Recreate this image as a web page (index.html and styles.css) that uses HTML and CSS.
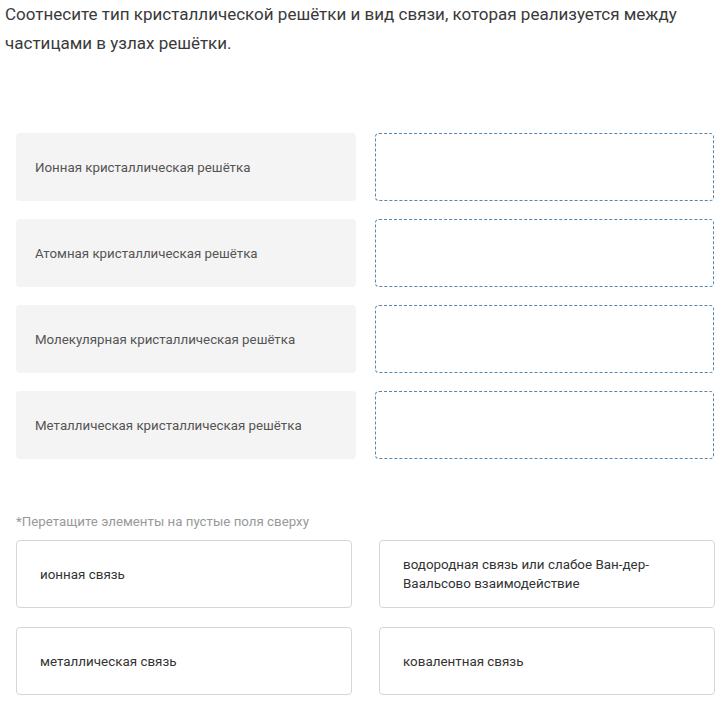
FILE: index.html
```html
<!DOCTYPE html>
<html lang="ru">
<head>
    <meta charset="UTF-8">
    <meta name="viewport" content="width=device-width, initial-scale=1.0">
    <title>Соотнесите тип кристаллической решётки</title>
    <link rel="stylesheet" href="styles.css">
</head>
<body>
    <div class="task">
        <p class="question">Соотнесите тип кристаллической решётки и вид связи, которая реализуется между частицами в узлах решётки.</p>
        <div class="pairs">
            <div class="pair">
                <div class="term">Ионная кристаллическая решётка</div>
                <div class="slot"></div>
            </div>
            <div class="pair">
                <div class="term">Атомная кристаллическая решётка</div>
                <div class="slot"></div>
            </div>
            <div class="pair">
                <div class="term">Молекулярная кристаллическая решётка</div>
                <div class="slot"></div>
            </div>
            <div class="pair">
                <div class="term">Металлическая кристаллическая решётка</div>
                <div class="slot"></div>
            </div>
        </div>
        <div class="hint">*Перетащите элементы на пустые поля сверху</div>
        <div class="options">
            <div class="option">ионная связь</div>
            <div class="option">водородная связь или слабое Ван-дер-Ваальсово взаимодействие</div>
            <div class="option">металлическая связь</div>
            <div class="option">ковалентная связь</div>
        </div>
    </div>
</body>
</html>
```

FILE: styles.css
```css
body {
    margin: 0;
    font-family: Roboto, "Open Sans", sans-serif;
    background-color: #fff;
    color: #333;
}
.task {
    padding: 0 14px 0 16px;
}
.question {
    margin: 0 0 0 -11px;
    font-size: 17px;
    line-height: 29px;
    color: #3a3a3a;
    max-width: 700px;
}
.pairs {
    display: flex;
    flex-direction: column;
    gap: 18px;
    margin-top: 75px;
}
.pair {
    display: flex;
    gap: 19px;
}
.term {
    flex: 0 0 340px;
    height: 68px;
    box-sizing: border-box;
    display: flex;
    align-items: center;
    padding-left: 19px;
    background-color: #f4f4f4;
    border-radius: 4px;
    font-size: 13.3px;
    color: #555;
}
.slot {
    flex: 1;
    height: 68px;
    box-sizing: border-box;
    border: 1px dashed #5687b0;
    border-radius: 4px;
}
.hint {
    margin-top: 55px;
    font-size: 13.3px;
    color: #999;
}
.options {
    display: grid;
    grid-template-columns: 336px 336px;
    column-gap: 27px;
    row-gap: 19px;
    margin-top: 11px;
}
.option {
    height: 68px;
    box-sizing: border-box;
    display: flex;
    align-items: center;
    padding: 0 40px 0 23px;
    border: 1px solid #d6d6d6;
    border-radius: 4px;
    font-size: 13.4px;
    line-height: 19px;
    color: #333;
}
```
